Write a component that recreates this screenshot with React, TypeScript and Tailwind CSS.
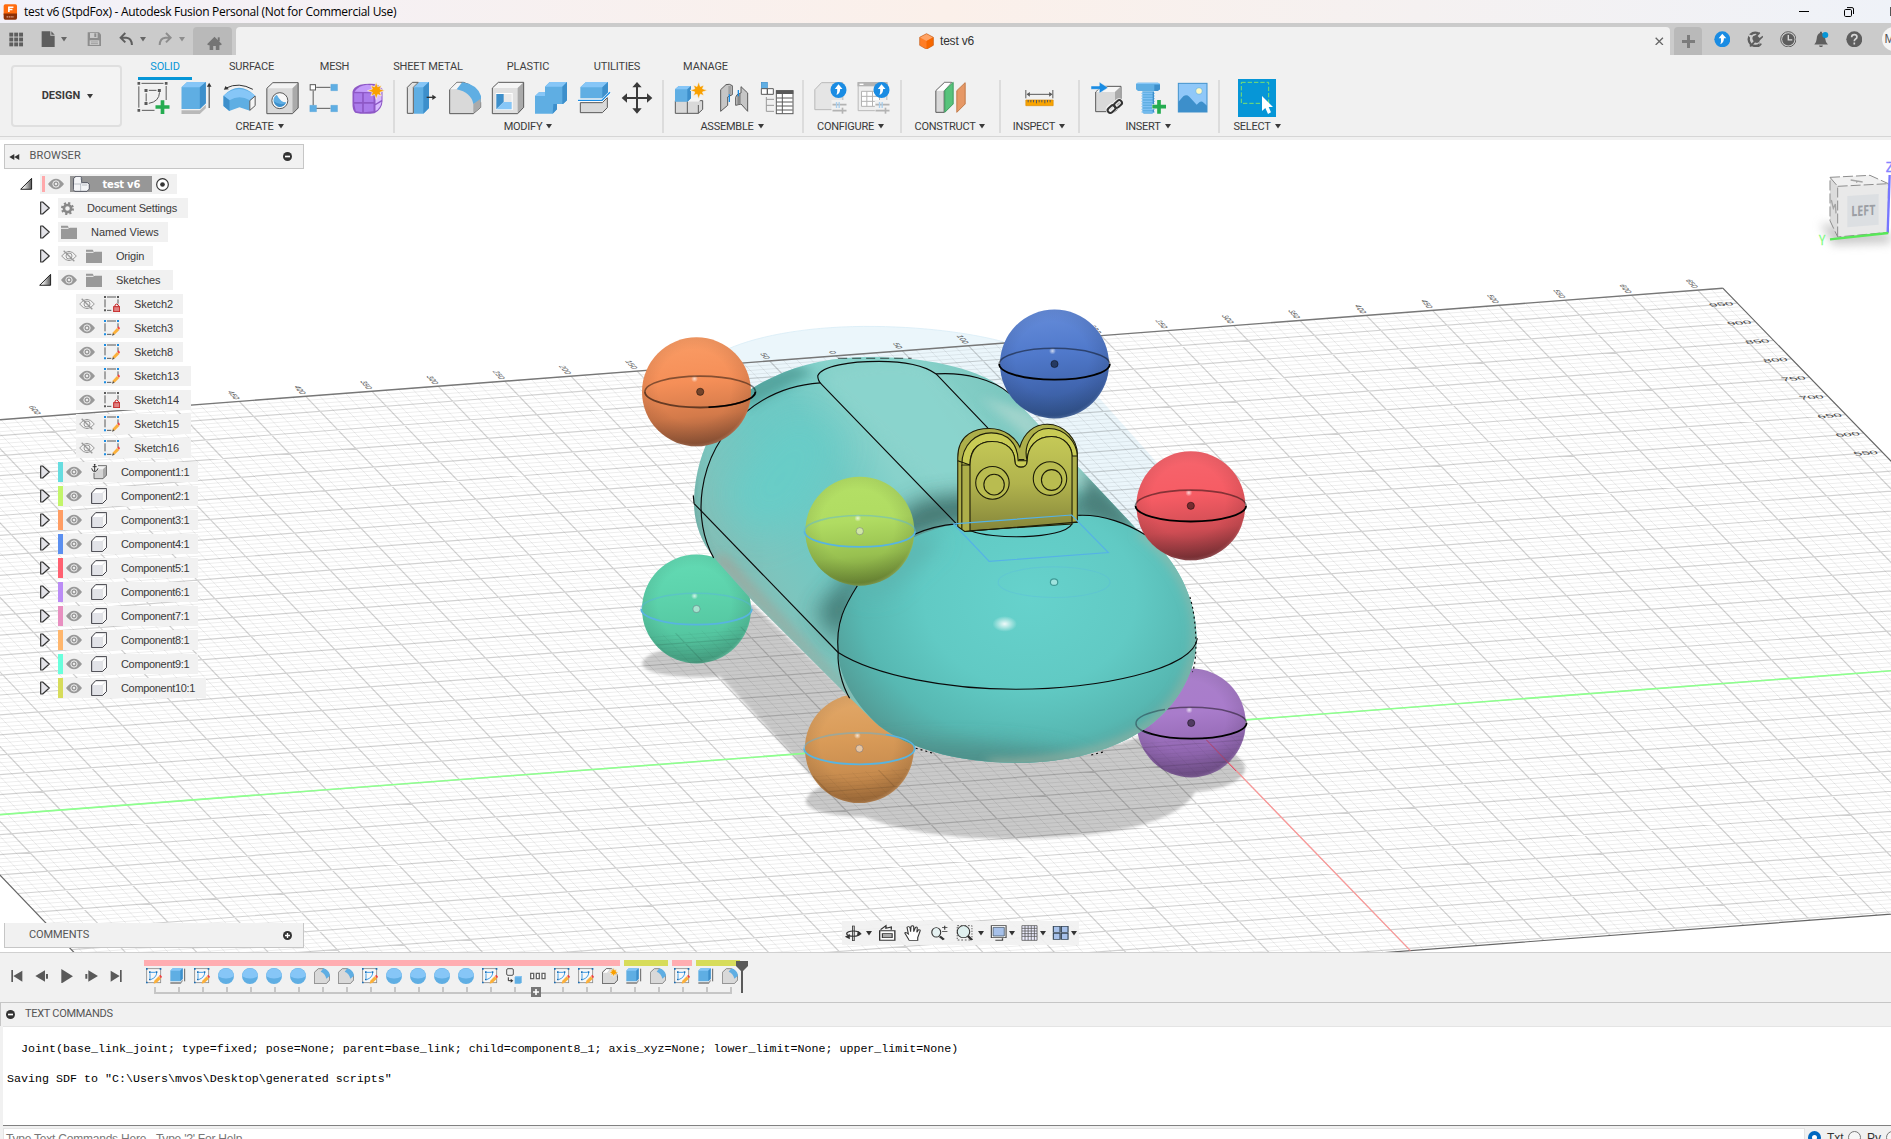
import React from "react";

type Kids = { children?: React.ReactNode };

/* ---------- shared helpers ---------- */

function Ico({ vb, w, h, children, className = "" }: { vb: string; w: number; h: number; className?: string } & Kids) {
  return (
    <svg viewBox={vb} width={w} height={h} preserveAspectRatio="none" className={`block shrink-0 ${className}`} fill="none">
      {children}
    </svg>
  );
}

const Tool = ({ x, y, children }: { x: number; y: number } & Kids) => (
  <Ico vb={`${x} ${y} 129 108`} w={43} h={36}>{children}</Ico>
);

const Caret = ({ className = "" }: { className?: string }) => (
  <svg viewBox="0 0 6 5" width={6} height={5} className={`shrink-0 ${className}`}>
    <path d="M0 0H6L3 4.5Z" fill="currentColor" />
  </svg>
);

const Star = ({ x, y, r }: { x: number; y: number; r: number }) => {
  const pts = Array.from({ length: 16 }, (_, i) => {
    const a = (i * Math.PI) / 8 - Math.PI / 2;
    const q = i % 2 ? r * 0.48 : i % 4 === 0 ? r : r * 0.85;
    return `${(x + q * Math.cos(a)).toFixed(1)},${(y + q * Math.sin(a)).toFixed(1)}`;
  });
  return <polygon points={pts.join(" ")} fill="#f9a000" stroke="#f2f2f2" strokeWidth="2" />;
};

const UpBadge = ({ x, y }: { x: number; y: number }) => (
  <g>
    <circle cx={x} cy={y} r="24" fill="#1a8ce3" />
    <path d={`M${x} ${y - 17}L${x + 12} ${y - 3}H${x + 5}Q${x + 5} ${y + 10} ${x - 6} ${y + 15}Q${x - 3} ${y + 8} ${x - 4} ${y - 3}H${x - 11}Z`} fill="#fff" />
  </g>
);

/* ---------- title bar and tabs ---------- */

function TitleBar() {
  return (
    <div className="flex h-[23px] shrink-0 items-center bg-gradient-to-r from-[#f2f1f9] via-[#fbf0ea] to-[#eff2f8]">
      <Ico vb="8 8 46 50" w={15} h={16} className="ml-[3px]">
        <rect x="10" y="9" width="41" height="36" rx="5" fill="#ff6b0f" />
        <path d="M10 38H51V52Q51 57 46 57H15Q10 57 10 52Z" fill="#8c2f06" />
        <path d="M26 33V18H40M26 25H37" stroke="#fff" strokeWidth="5" />
        <path d="M19 48H42" stroke="#d9a08a" strokeWidth="4" strokeDasharray="5 2" />
      </Ico>
      <span className="ml-[6px] whitespace-nowrap font-['Open_Sans',sans-serif] text-[12px] leading-[23px] tracking-[-0.28px] text-black">
        test v6 (StpdFox) - Autodesk Fusion Personal (Not for Commercial Use)
      </span>
      <div className="ml-auto flex items-center text-black">
        <div className="h-px w-[10px] bg-black" />
        <Ico vb="0 0 10 10" w={10} h={10} className="ml-[35px]">
          <rect x=".5" y="2.5" width="7" height="7" rx="1.2" stroke="#000" />
          <path d="M3 .6H8Q9.5 .6 9.5 2V7" stroke="#000" />
        </Ico>
        <div className="ml-[36px] h-[9px] w-px overflow-hidden bg-[#555]" />
      </div>
    </div>
  );
}

function TabBar() {
  return (
    <div className="flex h-8 shrink-0 items-end bg-[#cbcbcb] text-[#666]">
      <div className="flex h-8 w-[193px] items-center">
        <Ico vb="26 94 46 46" w={15} h={15} className="ml-[9px]">
          {[0, 1, 2].map((r) => [0, 1, 2].map((c) => (
            <rect key={`${r}${c}`} x={27 + c * 15} y={96 + r * 15} width="12" height="12" fill="#5e5e5e" />
          )))}
        </Ico>
        <Ico vb="124 92 42 50" w={14} h={16.6} className="ml-[17px]">
          <path d="M126 93H152V106H165V141H126Z" fill="#5e5e5e" />
          <path d="M155 93L165 103H155Z" fill="#5e5e5e" />
        </Ico>
        <Caret className="ml-[6px]" />
        <Ico vb="260 95 44 44" w={14.6} h={14.6} className="ml-[19.5px]">
          <path d="M262 96H296L303 103V138H262Z" fill="#8d8d8d" />
          <path d="M269 98H292V113H269Z" fill="#cbcbcb" /><path d="M282 99H288V110H282Z" fill="#8d8d8d" />
          <path d="M268 120H297V134H268Z" fill="#cbcbcb" /><path d="M272 125H293M272 130H293" stroke="#8d8d8d" strokeWidth="2" />
        </Ico>
        <Ico vb="358 96 44 42" w={14.6} h={14} className="ml-[18px]">
          <path d="M377 99L363 113L377 127M365 113H380Q396 114 397 135" stroke="#5e5e5e" strokeWidth="6" />
        </Ico>
        <Caret className="ml-[6px]" />
        <Ico vb="476 96 44 42" w={14.6} h={14} className="ml-[12.5px]">
          <path d="M500 99L514 113L500 127M513 113H498Q482 114 481 135" stroke="#8d8d8d" strokeWidth="6" />
        </Ico>
        <Caret className="ml-[6px] text-[#8d8d8d]" />
      </div>
      <div className="flex h-7 w-[39px] items-center justify-center rounded-t bg-[#b9b9b9]">
        <Ico vb="619 104 46 44" w={15} h={14.6} className="ml-[3px] mt-1">
          <path d="M619 129L642 106L665 129L660 132H657V147H646V134H638V147H627V132H624Z" fill="#757575" />
          <path d="M652 108H658V120H652Z" fill="#757575" />
        </Ico>
      </div>
      <div className="ml-1 flex h-7 w-[1434px] items-center rounded-t bg-[#f1f1f1]">
        <div className="ml-[683px] flex items-center">
          <Ico vb="358 10 46 50" w={15} h={16.6}>
            <path d="M381 12L402 23V47L381 59L360 47V23Z" fill="#ff7e26" />
            <path d="M381 12L402 23L381 34L360 23Z" fill="#ffa365" />
            <path d="M381 34L402 23V47L381 59Z" fill="#f76800" />
            <path d="M381 12L402 23V47L381 59L360 47V23Z" stroke="#c36424" strokeWidth="2" />
          </Ico>
          <span className="ml-[6px] text-[12px] tracking-[-0.2px] text-[#333]">test v6</span>
        </div>
        <Ico vb="464 110 26 26" w={8.6} h={8.6} className="ml-auto mr-[6px]">
          <path d="M466 112L488 134M488 112L466 134" stroke="#666" strokeWidth="4" />
        </Ico>
      </div>
      <div className="ml-1 flex h-7 w-7 items-center justify-center rounded-t bg-[#b9b9b9]">
        <Ico vb="0 0 13 13" w={13} h={13}><path d="M6.5 0V13M0 6.5H13" stroke="#7c7c7c" strokeWidth="3" /></Ico>
      </div>
      <div className="flex h-8 flex-1 items-center gap-[16.4px] overflow-hidden pl-[11.6px]">
        <Ico vb="641 91 50 50" w={16.6} h={16.6}><UpBadge x={666} y={116} /></Ico>
        <Ico vb="740 92 50 50" w={16.6} h={16.6}>
          <circle cx="765" cy="117" r="20" stroke="#5e5e5e" strokeWidth="7" />
          <path d="M738 100L758 106L762 118L776 96L790 100V140H775L779 122L765 128L755 118Z" fill="#cbcbcb" />
          <path d="M747 137L760 123Q750 108 765 105L777 95L780 99L772 107L778 113L787 106L789 110L779 120Q776 132 764 127L752 140Z" fill="#5e5e5e" />
          <path d="M783 130A23 23 0 0 1 760 140" stroke="#5e5e5e" strokeWidth="5" />
        </Ico>
        <Ico vb="839 92 50 50" w={16.6} h={16.6}>
          <circle cx="864" cy="117" r="23" stroke="#5e5e5e" strokeWidth="3" /><circle cx="864" cy="117" r="18.5" fill="#5e5e5e" />
          <path d="M864 104V119H876" stroke="#ddd" strokeWidth="4" />
        </Ico>
        <Ico vb="939 92 50 50" w={16.6} h={16.6}>
          <path d="M943 133Q949 128 950 116Q951 101 960 98V94H966V98Q975 102 976 116Q977 128 984 133Z" fill="#5e5e5e" />
          <path d="M957 136H969Q968 141 963 141Q958 141 957 136Z" fill="#5e5e5e" /><circle cx="976" cy="104" r="9" fill="#0696d7" />
        </Ico>
        <Ico vb="1037 92 50 50" w={16.6} h={16.6}>
          <circle cx="1062" cy="117" r="24" fill="#5e5e5e" />
          <path d="M1054 111Q1054 103 1062 103Q1070 103 1070 110Q1070 114 1065 117Q1062 119 1062 123M1062 127V133" stroke="#d8d8d8" strokeWidth="5" />
        </Ico>
        <div className="ml-[3px] flex h-6 w-6 shrink-0 items-center rounded-full bg-[#f5f5f5] pl-[3px] text-[12px] text-[#555]">M</div>
      </div>
    </div>
  );
}

/* ---------- ribbon ---------- */

const BL = "#5faee3", BT = "#86c6f7", BD = "#3d8fcb", GR = "#d9d9d9", LN = "#595959";

const createIcons = [
  <Tool key="a" x={397.5} y={240}>
    <path d="M423 250H489M415 259V323M424 331H462M497 258V300M437 280V304M445 271H468M477 277Q476 305 445 310" stroke={LN} strokeWidth="3" />
    <path d="M411 246h8v8h-8zM493 246h8v8h-8zM411 327h8v8h-8zM432 267h9v9h-9zM472 267h9v9h-9zM432 306h9v9h-9z" fill={LN} />
    <path d="M486 301V342M465 321H507" stroke="#f2f2f2" strokeWidth="15" /><path d="M486 301V342M465 321H507" stroke="#25ac50" strokeWidth="11" />
  </Tool>,
  <Tool key="b" x={526.5} y={240}>
    <path d="M543 331H598L616 314V325L598 342H543Z" fill="#b9b9b9" />
    <path d="M543 262L560 246H616V310L598 327H543Z" fill={BL} /><path d="M543 262L560 246H616L598 262Z" fill={BT} /><path d="M598 262L616 246V310L598 327Z" fill={BD} />
    <path d="M626 324V256" stroke="#333" strokeWidth="3" /><path d="M619 260L626 248L633 260Z" fill="#333" />
  </Tool>,
  <Tool key="c" x={655.5} y={240}>
    <path d="M669 287Q715 240 764 287L748 303V332L717 322L686 333L669 318Z" fill={BL} />
    <path d="M669 287Q715 247 764 287L748 301Q717 282 687 301Z" fill={BT} /><path d="M669 287L687 301V333L669 318Z" fill={BD} />
    <path d="M748 302L764 288V317L748 331Z" fill="#f5f5f5" stroke={LN} strokeWidth="3" />
    <path d="M677 264Q715 245 757 268" stroke="#333" strokeWidth="3" /><path d="M670 269L675 258L685 268Z" fill="#333" />
  </Tool>,
  <Tool key="d" x={784.5} y={240}>
    <path d="M799 265L817 248H893V324L876 341H799Z" fill={GR} /><path d="M799 265L817 248H893L876 265Z" fill="#f3f3f3" /><path d="M876 265L893 248V324L876 341Z" fill="#aaa" />
    <path d="M799 265L817 248H893V324L876 341H799Z" stroke={LN} strokeWidth="3" />
    <circle cx="838" cy="302" r="24" fill="#f7f7f7" stroke={LN} strokeWidth="3" />
    <path d="M829 284Q818 291 819 303Q822 318 838 321Q852 319 857 307Q840 307 829 284Z" fill={BL} /><path d="M820 304Q824 320 838 321Q850 320 856 309Q838 318 820 304Z" fill={BD} />
  </Tool>,
  <Tool key="e" x={913.5} y={240}>
    <path d="M947 262H990M938 272V316M947 325H990" stroke={LN} strokeWidth="3" />
    <rect x="929" y="254" width="16" height="16" fill="#fff" stroke={LN} strokeWidth="3" />
    <path d="M991 253h20v19h-20zM928 316h20v19h-20zM991 316h20v19h-20z" fill={BL} stroke="#4c9bd0" strokeWidth="1" />
  </Tool>,
  <Tool key="f" x={1042.5} y={240}>
    <path d="M1056 275Q1058 262 1079 254Q1098 250 1125 252Q1138 257 1146 267V304Q1145 328 1122 340Q1090 344 1064 338Q1055 330 1056 310Z" fill="#8e58c6" />
    <path d="M1062 275Q1075 256 1100 254L1133 259L1118 277Z" fill="#c49bfa" />
    <path d="M1061 280H1085V306H1061ZM1090 280H1119V306H1090ZM1061 311H1085V337L1066 334ZM1090 311H1119V334L1090 337Z" fill="#ab7beb" />
    <path d="M1125 278L1143 264V300L1125 311ZM1125 316L1143 305Q1140 325 1125 333Z" fill="#d9bbff" />
    <Star x={1127} y={272} r={26} />
  </Tool>,
];

const modifyIcons = [
  <Tool key="a" x={0} y={90}>
    <path d="M22 112L37 97H55L40 112V190H22Z" fill="#e1e1e1" stroke={LN} strokeWidth="3" />
    <path d="M42 112L59 96H87V174L70 191H42Z" fill={BL} /><path d="M42 112L59 96H87L70 112Z" fill={BT} /><path d="M70 112L87 96V174L70 191Z" fill={BD} />
    <path d="M80 142H100" stroke="#333" strokeWidth="4" /><path d="M97 134L109 142L97 150Z" fill="#333" />
  </Tool>,
  <Tool key="b" x={129} y={90}>
    <path d="M149 119L171 97H190Q232 107 242 158V172L220 191H149Z" fill={GR} stroke={LN} strokeWidth="3" />
    <path d="M150 118L171 98H185L172 117Z" fill="#f5f5f5" /><path d="M170 118L187 97Q231 103 243 138V155L220 162Q213 127 170 118Z" fill={BL} />
    <path d="M220 162L242 146V172L220 190Z" fill="#aaa" />
  </Tool>,
  <Tool key="c" x={258} y={90}>
    <path d="M277 114L295 97H371V172L353 191H277Z" fill="#e0e0e0" /><path d="M277 114L295 97H371L353 114Z" fill="#f5f5f5" /><path d="M353 114L371 97V172L353 191Z" fill="#aaa" />
    <path d="M277 114L295 97H371V172L353 191H277Z" stroke={LN} strokeWidth="3" />
    <path d="M287 129H338V180H287Z" fill="#fff" /><path d="M289 132H335V178H289Z" fill="#e9e9e9" /><path d="M289 132H311V156L289 178Z" fill={BD} /><path d="M289 178L311 156H335V178Z" fill={BT} />
  </Tool>,
  <Tool key="d" x={387} y={90}>
    <path d="M405 138L417 127H435V110L449 96H501V151L489 162H471V178L458 191H405Z" fill={BL} />
    <path d="M405 138L417 127H435V138ZM435 110L449 96H501L487 110Z" fill={BT} /><path d="M487 110L501 96V151L489 162H487ZM460 162H471V178L458 191Z" fill={BD} />
  </Tool>,
  <Tool key="e" x={516} y={90}>
    <path d="M541 112L558 96H624V129L607 145H541Z" fill={BL} /><path d="M541 112L558 96H624L607 112Z" fill={BT} /><path d="M607 112L624 96V129L607 145Z" fill={BD} />
    <path d="M541 158H607L622 143V173L607 188H541Z" fill={GR} stroke={LN} strokeWidth="3" />
    <path d="M534 151H606L630 127" stroke="#fff" strokeWidth="8" /><path d="M534 151H606L630 127" stroke="#1a8ce3" strokeWidth="4" />
  </Tool>,
  <Tool key="f" x={645} y={90}>
    <path d="M711 105V182M674 144H748" stroke="#3a3a3a" strokeWidth="6" />
    <path d="M697 112L711 96L725 112ZM697 175L711 191L725 175ZM681 130L665 144L681 158ZM741 130L757 144L741 158Z" fill="#3a3a3a" />
  </Tool>,
];

const assembleIcons = [
  <Tool key="a" x={807} y={90}>
    <path d="M826 152H908V178L895 190H826ZM862 152V190M895 165V190" fill={GR} stroke={LN} strokeWidth="3" />
    <path d="M862 155L874 143H908L896 155Z" fill="#f5f5f5" />
    <path d="M825 118L836 108H873V145L862 155H825Z" fill={BL} /><path d="M825 118L836 108H873L862 118Z" fill={BT} /><path d="M862 118L873 108V145L862 155Z" fill={BD} />
    <Star x={896} y={121} r={26} />
  </Tool>,
  <Tool key="b" x={936} y={90}>
    <path d="M962 119L978 104Q988 100 997 107V134L983 141V166L962 184Z" fill="#c6c6c6" stroke={LN} strokeWidth="3" />
    <path d="M1043 129L1023 110V129Q1007 133 1007 142V166L1023 162L1043 184Z" fill="#c6c6c6" stroke={LN} strokeWidth="3" />
    <path d="M1012 136V165L1022 160V130Z" fill="#8a8a8a" /><path d="M989 108V134" stroke="#a2a2a2" strokeWidth="8" />
    <path d="M988 133V156M1015 120V139" stroke="#1a8ce3" strokeWidth="4" />
  </Tool>,
  <Tool key="c" x={1065} y={90}>
    <rect x="1084" y="97" width="18" height="18" fill={BL} stroke={BD} strokeWidth="2" />
    <path d="M1084 116h18v17h-18zM1102 116h18v17h-18z" fill="#fff" stroke={LN} strokeWidth="3" />
    <path d="M1099 141V184M1099 148H1122M1099 166H1122M1099 184H1122" stroke="#999" strokeWidth="3" />
    <rect x="1129" y="122" width="50" height="69" fill="#fff" stroke={LN} strokeWidth="3" /><path d="M1128 121H1180V132H1128Z" fill={LN} />
    <path d="M1147 132V190M1130 144H1178M1130 156H1178M1130 168H1178M1130 180H1178" stroke={LN} strokeWidth="3" />
  </Tool>,
];

const Sliders = ({ x }: { x: number }) => (
  <g><path d={`M${x} 224H${x + 42}M${x} 242H${x + 42}`} stroke="#b3b3b3" strokeWidth="5" /><path d={`M${x + 12} 216V234M${x + 20} 216V234`} stroke="#a9cfee" strokeWidth="4" /><path d={`M${x + 30} 233V251`} stroke="#b3b3b3" strokeWidth="5" /></g>
);

const configureIcons = [
  <Tool key="a" x={28.5} y={150}>
    <path d="M46 179L66 158H130V239H46Z" fill="#e5e5e5" stroke="#b8b8b8" strokeWidth="3" />
    <UpBadge x={117} y={180} /><path d="M96 210H142V252H96Z" fill="#f1f1f1" /><Sliders x={99} />
  </Tool>,
  <Tool key="b" x={157.5} y={150}>
    <path d="M176 158H262V242H176Z" fill="#eee" stroke="#b8b8b8" strokeWidth="3" /><path d="M174 156H264V169H174Z" fill="#b3b3b3" /><path d="M180 161H192V165H180Z" fill="#fff" />
    <path d="M186 184H240V229H186ZM202 184V229M219 184V229M186 199H240M186 214H240" stroke="#b3b3b3" strokeWidth="3" fill="#fff" />
    <UpBadge x={246} y={180} /><path d="M226 210H272V252H226Z" fill="#f1f1f1" /><Sliders x={228} />
  </Tool>,
];

const constructIcons = [
  <Tool key="a" x={388.5} y={150}>
    <path d="M409 182L435 157H456L434 182V247H409Z" fill={GR} stroke={LN} strokeWidth="3" /><path d="M411 182L436 158H455L433 182Z" fill="#fff" />
    <path d="M436 181L461 157V222L436 247Z" fill="#57c37b" stroke="#3f9d60" strokeWidth="3" /><path d="M472 182L497 158V222L472 247Z" fill="#e69866" stroke="#c27a48" strokeWidth="3" />
  </Tool>,
];
const inspectIcons = [
  <Tool key="a" x={655.5} y={150}>
    <path d="M679 180V205M760 180V205M685 193H755" stroke={LN} strokeWidth="3" /><path d="M681 193L691 186V200ZM759 193L749 186V200Z" fill={LN} />
    <path d="M679 210H761V227H679Z" fill="#f9a400" stroke="#db8a00" strokeWidth="2" /><path d="M686 210V217M694 210V217M702 210V217M711 210V220M719 210V217M727 210V217M736 210V220M744 210V217M752 210V217" stroke={LN} strokeWidth="3" />
  </Tool>,
];
const insertIcons = [
  <Tool key="a" x={855} y={150}>
    <path d="M887 186L905 169H963V227L945 245H887Z" fill={GR} stroke={LN} strokeWidth="3" /><path d="M889 186L905 171H960L944 186Z" fill="#f6f6f6" /><path d="M945 186L962 170V226L945 244Z" fill="#aaa" />
    <path d="M873 168H898V156L924 173L898 190V178H873Z" fill="#1a8ce3" stroke="#f1f1f1" strokeWidth="1.5" />
    <g stroke="#f1f1f1" strokeWidth="12"><rect x="922" y="228" width="25" height="16" rx="8" transform="rotate(-42 934 236)" /><rect x="942" y="214" width="25" height="16" rx="8" transform="rotate(-42 954 222)" /></g>
    <g stroke="#333" strokeWidth="6"><rect x="922" y="230" width="26" height="16" rx="8" transform="rotate(-42 934 238)" /><rect x="941" y="214" width="26" height="16" rx="8" transform="rotate(-42 954 222)" /></g>
  </Tool>,
  <Tool key="b" x={984} y={150}>
    <path d="M1008 162L1013 158H1074L1080 162V178L1073 183H1014L1008 178Z" fill={BL} /><path d="M1008 162L1013 158H1074L1080 162Z" fill={BT} /><path d="M1063 164H1080V178L1073 183H1063Z" fill={BD} />
    <path d="M1027 184H1062V247L1057 251H1031L1027 247Z" fill={BL} /><path d="M1024 190H1065M1024 198H1065M1024 206H1065M1024 214H1065M1024 222H1065M1024 230H1065M1024 238H1065M1024 246H1065" stroke={BT} strokeWidth="3" /><path d="M1060 186V247" stroke={BD} strokeWidth="4" />
    <path d="M1077 209V252M1056 230H1099" stroke="#f1f1f1" strokeWidth="15" /><path d="M1077 210V251M1057 230H1098" stroke="#25ac50" strokeWidth="11" />
  </Tool>,
  <Tool key="c" x={1113} y={150}>
    <rect x="1135" y="160" width="86" height="86" fill="#90c8f9" stroke="#4292cc" strokeWidth="3" />
    <path d="M1135 216Q1143 207 1150 199Q1159 192 1168 200L1190 224L1198 217Q1204 211 1211 218L1221 227V246H1135Z" fill="#3d8fcb" /><circle cx="1197" cy="183" r="10" fill="#fff9c4" stroke="#5faee3" strokeWidth="2" />
  </Tool>,
];
const selectIcons = [
  <svg key="a" viewBox="1314 147 114 114" width={38} height={38} className="-mt-px -mb-px block shrink-0">
    <path d="M1314 147H1428V261H1314Z" fill="#0696d7" /><path d="M1324 157H1406V220H1324Z" fill="none" stroke="#7be06e" strokeWidth="3" strokeDasharray="13 6" />
    <path d="M1386 198V243L1396 234L1404 252L1413 247L1406 231H1419Z" fill="#fff" />
  </svg>,
];

const ribbonTabs: [string, string][] = [
  ["SOLID", "w-[78px]"], ["SURFACE", "w-[95px]"], ["MESH", "w-[71px]"], ["SHEET METAL", "w-[116px]"],
  ["PLASTIC", "w-[84px]"], ["UTILITIES", "w-[94px]"], ["MANAGE", "w-[83px]"],
];

const groups: [string, string, React.ReactNode[], string][] = [
  ["CREATE", "w-[264px]", createIcons, "-ml-[5px]"], ["MODIFY", "w-[269px]", modifyIcons, "-ml-[1px]"], ["ASSEMBLE", "w-[140px]", assembleIcons, "-ml-[2px]"],
  ["CONFIGURE", "w-[98px]", configureIcons, "-ml-[3px]"], ["CONSTRUCT", "w-[99px]", constructIcons, "-ml-[1px]"], ["INSPECT", "w-[79px]", inspectIcons, "-ml-[1px]"],
  ["INSERT", "w-[140px]", insertIcons, "-ml-[2px]"], ["SELECT", "w-[74px]", selectIcons, "ml-0"],
];

function Ribbon() {
  return (
    <div className="flex h-[85px] shrink-0 border-b-[3px] border-[#f1f1f1] bg-[#f1f1f1]">
      <div className="flex w-full border-b border-[#d6d6d6]">
        <button className="ml-[11px] mt-[10px] flex h-[62px] w-[111px] items-center justify-center gap-[7px] rounded border-2 border-[#dfdfdf] bg-[#f3f3f3] pl-[2px] pt-[1px] font-['Roboto',sans-serif] text-[11px] font-bold text-[#3a3a3a]">
          DESIGN <Caret className="-mt-px" />
        </button>
        <div className="ml-[4px]">
          <div className="flex h-[25px] font-['Roboto',sans-serif] text-[11px] tracking-[-0.15px] text-[#3f3f3f]">
            {ribbonTabs.map(([t, w], i) => (
              <div key={t} className={`${w} flex justify-center pt-[4px] leading-4`}>
                {i === 0 ? <span className="flex w-[54px] justify-center border-b-[3px] border-[#0696d7] text-[#0696d7]">{t}</span> : t}
              </div>
            ))}
          </div>
          <div className="ml-[5px] flex">
            {groups.map(([name, w, icons, off], i) => (
              <div key={name} className={`${w} flex h-[53px] flex-col items-center ${i < groups.length - 1 ? "border-r-2 border-[#dcdcdc]" : ""}`}>
                <div className="flex h-9">{icons}</div>
                <div className={`mt-[4px] flex items-center gap-[4px] whitespace-nowrap font-['Roboto',sans-serif] text-[11px] leading-[14px] tracking-[-0.25px] text-[#3a3a3a] ${off}`}>
                  {name}<Caret className="-mt-[2px]" />
                </div>
              </div>
            ))}
          </div>
        </div>
      </div>
    </div>
  );
}

/* ---------- 3D viewport ---------- */

const gx = (u: number, v: number) => 1191 + (66.5 - 0.011 * v) * u - (v > 0 ? 17.93 : 18.1) * v;
const gy = (u: number, v: number) => 724 - 5.06 * u - (v > 0 ? 18.59 : 18.7) * v;
const U0 = -18.72, U1 = 13.38, V0 = -12.12, V1 = 19.8;
const seg = (u1: number, v1: number, u2: number, v2: number) =>
  `M${gx(u1, v1).toFixed(1)} ${gy(u1, v1).toFixed(1)}L${gx(u2, v2).toFixed(1)} ${gy(u2, v2).toFixed(1)}`;

function gridPaths() {
  let major = "", minor = "";
  for (let i = Math.ceil(U0 * 5); i <= U1 * 5; i++) {
    const d = seg(i / 5, V0, i / 5, 0) + seg(i / 5, 0, i / 5, V1);
    if (i % 5 === 0) major += d; else minor += d;
  }
  for (let i = Math.ceil(V0 * 5); i <= V1 * 5; i++) {
    const d = seg(U0, i / 5, U1, i / 5);
    if (i % 5 === 0) major += d; else minor += d;
  }
  return { major, minor };
}
const grid = gridPaths();

const Grid = () => (
  <g fill="none">
    <path d={grid.minor} stroke="#000" strokeOpacity=".07" />
    <path d={grid.major} stroke="#000" strokeOpacity=".18" strokeWidth="1.2" />
  </g>
);

const balls: Record<string, [number, number, string[]]> = {
  orange: [696.5, 391.8, ["#fa9c65", "#f58f58", "#d37a4a", "#8f5437"]],
  blue: [1054.5, 364, ["#658cda", "#5079cb", "#4166b0", "#32558f"]],
  red: [1190.8, 505.8, ["#f6656d", "#f65c64", "#cf4d54", "#7d3237"]],
  lime: [859.8, 531.2, ["#b4e066", "#b0dc62", "#98c050", "#6d8a35"]],
  mint: [696.5, 609, ["#63dbb4", "#5cd2ab", "#55c7a1", "#4bab8b"]],
  amber: [859.4, 748.6, ["#e2a869", "#d99b58", "#c98d4f", "#a8713c"]],
  purple: [1191.2, 723, ["#a97fca", "#a97ccb", "#9469b4", "#76538f"]],
};

function Ball({ id, blue = false, dx = 0 }: { id: string; blue?: boolean; dx?: number }) {
  const [x, y] = balls[id];
  const c = blue ? "#58b4e0" : "#000";
  return (
    <g>
      <circle cx={x} cy={y} r="54.5" fill={`url(#${id})`} />
      <circle cx={x} cy={y} r="54.5" fill="url(#rim)" />
      <circle cx={x - 2} cy={y - 13} r="3.5" fill="url(#spec)" opacity=".8" />
      <path d={`M${x + dx - 55.3} ${y}A55.3 15.7 0 0 1 ${x + dx + 55.3} ${y}`} fill="none" stroke={c} strokeOpacity=".45" strokeWidth="1.6" />
      <path d={`M${x + dx - 55.3} ${y}A55.3 15.7 0 0 0 ${x + dx + 55.3} ${y}`} fill="none" stroke={c} strokeOpacity={id === "orange" ? 0.55 : 1} strokeWidth="1.8" />
      {id === "orange" && <path d={`M${x + 12} ${y + 15.4}A55.3 15.7 0 0 0 ${x + dx + 55.3} ${y}`} fill="none" stroke="#000" strokeWidth="1.6" />}
      <circle cx={x + dx} cy={y} r="3.6" fill={blue ? "#fff" : "#000"} fillOpacity={blue ? 0.45 : 0.5} stroke={blue ? "#667" : "#000"} strokeOpacity=".45" />
    </g>
  );
}

const BODY = "M157 585C163 440 225 325 300 275C370 225 460 190 560 188C700 184 800 210 860 240C900 258 925 285 950 315L1250 680C1330 735 1390 860 1388 980C1387 1065 1345 1160 1270 1222C1210 1270 1110 1324 945 1324C790 1322 680 1280 610 1220C580 1190 560 1165 538 1142L300 870L205 748C170 700 155 640 157 585Z";
const FRONT = "M510 1015C503 930 528 870 557 828C600 750 680 680 800 655L1098 631C1160 628 1220 655 1262 685C1340 750 1390 870 1388 980C1387 1065 1345 1160 1270 1222C1210 1270 1110 1324 945 1324C790 1322 680 1280 610 1220C560 1170 512 1090 510 1015Z";

function Scene() {
  return (
    <svg viewBox="0 140 1891 812" width={1891} height={812} className="block">
      <defs>
        {Object.entries(balls).map(([id, [, , c]]) => (
          <linearGradient key={id} id={id} x1="0.45" x2="0.55" y1="0" y2="1">
            <stop offset="0" stopColor={c[0]} /><stop offset=".4" stopColor={c[1]} /><stop offset=".72" stopColor={c[2]} /><stop offset="1" stopColor={c[3]} />
          </linearGradient>
        ))}
        <radialGradient id="rim" cx=".48" cy=".45" r=".56"><stop offset=".6" stopColor="#000" stopOpacity="0" /><stop offset=".93" stopColor="#000" stopOpacity=".1" /><stop offset="1" stopColor="#fff" stopOpacity=".15" /></radialGradient>
        <radialGradient id="spec"><stop offset="0" stopColor="#fff" stopOpacity=".9" /><stop offset="1" stopColor="#fff" stopOpacity="0" /></radialGradient>
        <linearGradient id="tube" gradientUnits="userSpaceOnUse" x1="230" y1="760" x2="1010" y2="340">
          <stop offset="0" stopColor="#84beb6" /><stop offset=".12" stopColor="#7cc5be" /><stop offset=".28" stopColor="#6fc9c4" /><stop offset=".4" stopColor="#70c9c4" /><stop offset=".55" stopColor="#88d2cb" /><stop offset=".75" stopColor="#88d2cb" /><stop offset="1" stopColor="#78c4bc" />
        </linearGradient>
        <radialGradient id="front" gradientUnits="userSpaceOnUse" cx="0" cy="0" r="1" gradientTransform="translate(980 860) scale(520 500)">
          <stop offset="0" stopColor="#66d2cc" /><stop offset=".5" stopColor="#61cac4" /><stop offset=".8" stopColor="#57b8b2" /><stop offset="1" stopColor="#539d97" />
        </radialGradient>
        <linearGradient id="tooth" x1="0" x2="0" y1="0" y2="1"><stop offset="0" stopColor="#c5c957" /><stop offset=".5" stopColor="#b1b34d" /><stop offset="1" stopColor="#85863a" /></linearGradient>
        <filter id="b45" x="-80%" y="-80%" width="260%" height="260%"><feGaussianBlur stdDeviation="50" /></filter>
        <filter id="b30" x="-50%" y="-50%" width="200%" height="200%"><feGaussianBlur stdDeviation="30" /></filter>
        <filter id="b14" x="-50%" y="-50%" width="200%" height="200%"><feGaussianBlur stdDeviation="14" /></filter>
        <filter id="b4"><feGaussianBlur stdDeviation="4" /></filter>
        <clipPath id="cb"><path d={BODY} /></clipPath>
        <clipPath id="cf"><path d={FRONT} /></clipPath>
        <clipPath id="low">
          <path d="M649 636A54.5 54.5 0 0 0 748 626Z" /><path d="M812 776A54.5 54.5 0 0 0 910 767Z" /><path d="M1140 743A54.5 54.5 0 0 0 1245 733Z" />
        </clipPath>
      </defs>

      <path d={`M${gx(U0, V0)} ${gy(U0, V0)}L${gx(U1, V0)} ${gy(U1, V0)}L${gx(U1, V1)} ${gy(U1, V1)}L${gx(U0, V1)} ${gy(U0, V1)}Z`} fill="#fff" />
      <g transform="translate(630 290) scale(.40816 .35714)">
        <path d="M240 165C320 125 450 100 600 102C740 104 850 125 915 145L1140 290L1320 520C1350 560 1390 600 1388 655C1380 690 1350 715 1310 732L900 600L300 280Z" fill="#e3f2fa" fillOpacity=".7" />
        <path d="M240 165C320 125 450 100 600 102C740 104 850 125 915 145" fill="none" stroke="#d6ebf6" strokeWidth="2" />
        <path filter="url(#b4)" d="M30 1045C40 1010 100 1000 180 1010L300 880L600 1200L1200 1270L1390 1200L1490 1310C1530 1340 1500 1395 1385 1405C1340 1500 1150 1535 930 1537C760 1535 650 1510 575 1475C480 1475 420 1450 432 1425C445 1400 460 1395 470 1390L220 1082C150 1088 30 1080 30 1045Z" fill="#c9c9c9" />
      </g>
      <Grid />
      <path d={seg(U0, V1, U1, V1)} stroke="#777" strokeWidth="1.4" fill="none" />
      <path d={seg(U0, V0, U0, 0) + seg(U1, 0, U1, V1) + seg(U0, V0, U1, V0)} stroke="#666" strokeWidth="1.2" fill="none" />
      <path d={seg(U0, 0, U1, 0)} stroke="#8dff8d" strokeWidth="1.6" />
      <path d={seg(0, V0, 0, 0)} stroke="#ff9494" strokeWidth="1.1" />
      <g fontFamily="'Liberation Sans', sans-serif" fontSize="10" fill="#555" textAnchor="end">
        {Array.from({ length: 26 }, (_, i) => i - 12).map((u) => (
          <text key={u} transform={`matrix(.44 .5 -.85 .07 ${gx(u, V1) - 5} ${gy(u, V1) - 2})`}>{Math.abs(u * 50)}</text>
        ))}
        {Array.from({ length: 11 }, (_, i) => 19 - i).filter((v) => gx(U1, v) < 1891).map((v) => (
          <text key={v} transform={`matrix(1.42 -.11 .4 .5 ${gx(U1, v) - 3} ${gy(U1, v) + 2})`} fill="#444">{v * 50}</text>
        ))}
      </g>

      <Ball id="mint" blue />
      <Ball id="amber" blue />
      <Ball id="purple" />
      <g clipPath="url(#low)" opacity=".6"><Grid /></g>
      <path d="M1206.5 740L1236 771" stroke="#c83f66" strokeOpacity=".8" />

      <g transform="translate(630 290) scale(.40816 .35714)">
        <path d={BODY} fill="url(#tube)" />
        <g clipPath="url(#cb)">
          <path d="M230 560L400 330L520 420L430 620L300 700Z" fill="#68cdc8" filter="url(#b45)" opacity=".9" />
          <path d="M470 262C500 205 700 180 750 235L1000 540L800 600Z" fill="#8cd4cd" opacity=".7" filter="url(#b14)" />
          <path d="M240 260C150 330 120 600 190 760L130 760L80 400Z" fill="#4f9791" filter="url(#b14)" opacity=".9" />
          <path d="M290 330L250 270L400 210L450 230Z" fill="#4b9690" filter="url(#b14)" opacity=".7" />
          <path d="M460 900L520 1000L560 830L700 690L800 655L1100 632L1250 680L1130 560L1090 600L820 570L700 590L640 660Z" fill="#35635f" filter="url(#b30)" opacity=".85" />
          <path d="M860 300L1000 440L1110 560L1150 560L980 340Z" fill="#b9dcd4" filter="url(#b14)" opacity=".6" />
          <path d="M1120 510L1240 670L1180 650L1110 600Z" fill="#4a7d78" filter="url(#b14)" opacity=".8" />
          <path d="M205 748L540 1142L560 1150L230 740Z" fill="#a79f94" filter="url(#b14)" opacity=".75" />
        </g>
        <path d={FRONT} fill="url(#front)" />
        <g clipPath="url(#cf)">
          <ellipse cx="790" cy="1340" rx="330" ry="70" fill="#4e8c86" filter="url(#b30)" opacity=".8" />
          <path d="M1250 680C1340 750 1400 870 1390 980C1387 1065 1345 1160 1270 1222C1180 1300 1000 1330 880 1322" fill="none" stroke="#a9b9a8" strokeWidth="14" filter="url(#b14)" />
          <path d="M700 690L560 850L620 850L760 700Z" fill="#5cb3ae" filter="url(#b30)" />
        </g>
        <ellipse cx="918" cy="935" rx="30" ry="22" fill="url(#spec)" />
        <g fill="none" stroke="#0a0a0a" strokeWidth="1.15">
          {[
            "M538 1143C518 1105 508 1050 510 1015C503 930 528 880 557 828", "M697 684Q745 660 800 655", "M1098 631C1160 628 1220 655 1262 685",
            "M510 1015C600 1080 780 1118 945 1118C1140 1118 1380 1065 1390 975", "M157 598L510 1015", "M466 260C330 270 200 380 177 560C168 630 180 700 205 750",
            "M800 655L470 265Q460 255 460 240C470 212 540 200 610 200C680 200 725 215 750 235L877 387", "M750 235C820 230 890 250 930 290", "M835 674C880 698 1060 700 1083 655",
            "M157 598L155 575",
          ].map((d) => <path key={d} d={d} vectorEffect="non-scaling-stroke" />)}
          <path d="M510 191L690 191" strokeDasharray="9 5" strokeOpacity=".7" vectorEffect="non-scaling-stroke" />
          <path d="M1372 860C1388 920 1392 1030 1378 1070M700 1283L745 1298M1130 1302L1165 1292" strokeDasharray="2 3" vectorEffect="non-scaling-stroke" />
        </g>
        <g stroke="#1d1d08" strokeWidth="1.1">
          <path d="M803 470C803 400 850 388 880 388C920 388 945 415 955 440C965 400 990 376 1022 376C1065 376 1096 420 1096 460V650L820 676L803 662Z" fill="#adaf4a" vectorEffect="non-scaling-stroke" />
          <path d="M813 490C813 430 850 400 885 400C925 400 950 430 951 478L973 478C962 430 990 388 1025 388C1070 388 1095 430 1096 465L1083 465C1083 440 1065 410 1033 410C995 410 973 440 973 480C973 500 943 502 943 480C943 450 925 424 887 424C860 424 833 440 833 490Z" fill="#c9cc55" vectorEffect="non-scaling-stroke" />
          <path d="M833 674V490C833 440 860 424 887 424C925 424 943 450 943 480C943 502 973 502 973 480C973 440 995 410 1033 410C1065 410 1083 440 1083 465V655Z" fill="url(#tooth)" vectorEffect="non-scaling-stroke" />
          <path d="M813 490V670M803 478L833 490M820 676L1096 650M952 475L966 475" fill="none" vectorEffect="non-scaling-stroke" />
          <g fill="#b9bc50">
            <ellipse cx="888" cy="540" rx="41" ry="46" vectorEffect="non-scaling-stroke" /><ellipse cx="892" cy="545" rx="25" ry="29" vectorEffect="non-scaling-stroke" />
            <ellipse cx="1029" cy="528" rx="41" ry="47" vectorEffect="non-scaling-stroke" /><ellipse cx="1033" cy="532" rx="25" ry="29" vectorEffect="non-scaling-stroke" />
          </g>
        </g>
        <g fill="none" stroke="#55b2e6" strokeWidth="1.2">
          <path d="M793 655L1082 630L1172 735L880 760Z" vectorEffect="non-scaling-stroke" />
          <ellipse cx="1039" cy="818" rx="137" ry="43" opacity=".25" vectorEffect="non-scaling-stroke" />
          <circle cx="1039" cy="818" r="9" fill="#9fe3de" stroke="#3f9a95" vectorEffect="non-scaling-stroke" />
        </g>
      </g>
      <path d="M1136 723A55.3 15.7 0 0 1 1165 709.5M1136 723A55.3 15.7 0 0 0 1150 734" fill="none" stroke="#234" strokeOpacity=".5" strokeWidth="1.4" />
      <path d="M886 734.5A55.3 15.7 0 0 1 914.6 749" fill="none" stroke="#58b4e0" strokeWidth="1.5" />
      <Ball id="orange" dx={3.7} />
      <Ball id="blue" />
      <Ball id="red" />
      <Ball id="lime" blue />

      {/* orientation cube */}
      <g transform="translate(1500 0) scale(.33333)">
        <path d="M960 670L1173 700V730L1000 735Z" fill="#999" opacity=".5" filter="url(#b14)" />
        <path d="M990 532L1110 526L1165 551L1013 559Z" fill="#f0f0f0" /><path d="M990 532L1013 559V711L990 662Z" fill="#dcdcdc" /><path d="M1013 559L1165 551V697L1013 711Z" fill="#e9e9e9" />
        <path d="M990 532L1110 526L1165 551V697L1013 711L990 662ZM990 532L1013 559V711M1013 559L1165 551" fill="none" stroke="#8d8d8d" strokeWidth="3" strokeDasharray="30 9" />
        <path d="M1042 588L1136 582V674L1042 682Z" fill="#dcdfe2" />
        <text transform="matrix(1 -.06 0 1 1054 649)" fontFamily="'Open Sans', sans-serif" fontWeight="700" fontSize="43" textLength="72" lengthAdjust="spacingAndGlyphs" fill="#9b9ea4">LEFT</text>
        <path d="M994 600L1000 625L1006 612L1008 640M1052 540L1088 546M1070 541V548" stroke="#a5a5a5" strokeWidth="4" fill="none" />
        <path d="M1169 525L1163 698" stroke="#7676ff" strokeWidth="7" /><path d="M990 718L1165 699" stroke="#58e858" strokeWidth="7" />
        <text x="957" y="735" fontFamily="'Open Sans', sans-serif" fontSize="42" textLength="19" lengthAdjust="spacingAndGlyphs" fill="#7dfa7d" stroke="#7dfa7d">Y</text>
        <text x="1157" y="516" fontFamily="'Open Sans', sans-serif" fontSize="42" fill="#8585ff" stroke="#8585ff">Z</text>
      </g>
    </svg>
  );
}

/* ---------- browser tree ---------- */

const Eye = ({ off = false }: { off?: boolean }) => (
  <Ico vb="0 0 48 36" w={16} h={12}>
    {off ? (
      <g stroke="#9a9a9a" strokeWidth="3"><path d="M2 18Q24 -10 46 18Q24 46 2 18Z" /><circle cx="24" cy="18" r="9" /><path d="M8 2L40 34" strokeWidth="4" /></g>
    ) : (
      <g><path d="M0 18Q24 -14 48 18Q24 50 0 18Z" fill="#999" /><circle cx="24" cy="18" r="9.5" stroke="#f1f1f1" strokeWidth="3" /><circle cx="24" cy="18" r="3.5" fill="#f1f1f1" /></g>
    )}
  </Ico>
);
const Folder = () => (
  <Ico vb="0 0 48 42" w={16} h={14}><path d="M0 2H20L24 8H48V42H0Z" fill="#999" /><path d="M0 10H22L28 4H48" stroke="#f1f1f1" strokeWidth="3" /></Ico>
);
const SketchIcon = ({ lock = false }: { lock?: boolean }) => (
  <Ico vb="312 474 48 48" w={16} h={16}>
    <path d="M321 477H348M315 484V508M321 517H334M354 484V497" stroke="#595959" strokeWidth="3" />
    <path d="M312 474h6v6h-6zM351 474h6v6h-6zM312 514h6v6h-6z" fill={lock ? "#595959" : "#1a8ce3"} />
    {lock ? <g><rect x="341" y="506" width="18" height="15" fill="#df8080" stroke="#c52222" strokeWidth="3" /><path d="M345 505V501Q350 495 355 501V505" stroke="#c52222" strokeWidth="3" /></g>
      : <g><path d="M339 511L351 498L358 504L345 517L337 520Z" fill="#fbb03b" /><path d="M352 497L356 493L360 499L357 503Z" fill="#f33f3f" /><path d="M336 521L339 513L344 518Z" fill="#555" /></g>}
  </Ico>
);
const Cube = ({ anchor = false }: { anchor?: boolean }) =>
  anchor ? (
    <Ico vb="272 164 48 48" w={16} h={16}>
      <path d="M281 180L293 169H319V197L308 208H281Z" fill="#d4d4d4" /><path d="M281 180L293 169H319L308 180Z" fill="#f2f2f2" /><path d="M308 180L319 169V197L308 208Z" fill="#aaa" />
      <path d="M293 169H319V197L308 208H281V190" stroke="#555" strokeWidth="2.5" />
      <path d="M283 168V186M277 172H289M274 177Q276 187 283 187Q290 187 293 177" stroke="#f1f1f1" strokeWidth="6" />
      <path d="M283 168V186M277 172H289M274 177Q276 187 283 187Q290 187 293 177" stroke="#333" strokeWidth="3" /><circle cx="283" cy="166" r="2.5" fill="#333" />
    </Ico>
  ) : (
    <Ico vb="272 234 48 48" w={16} h={16}>
      <path d="M274 249L286 237H318V268L306 281H274Z" fill="#e2e3e8" />
      <path d="M274 249L286 237H318L306 249Z" fill="#fff" /><path d="M306 249L318 237V268L306 281Z" fill="#f8f8f8" />
      <path d="M274 249L286 236H319V268L306 281H274Z" stroke="#3a3a40" strokeWidth="3" strokeLinejoin="round" /><path d="M306 279V250L317 239" stroke="#c9cad0" strokeWidth="1.5" />
    </Ico>
  );
const Closed = () => (
  <Ico vb="119 190 32 42" w={10.6} h={14}><path d="M121 193L127 193L147 211L127 229H121Z" fill="#e3e3e8" stroke="#333" strokeWidth="3.5" strokeLinejoin="round" /></Ico>
);
const Open = () => (
  <Ico vb="60 120 38 38" w={12.6} h={12.6}><path d="M62 154L95 121V154Z" fill="url(#og)" stroke="#222" strokeWidth="3" /><defs><linearGradient id="og"><stop offset=".3" stopColor="#eee" /><stop offset="1" stopColor="#555" /></linearGradient></defs></Ico>
);

const sketches: [string, boolean, boolean, string][] = [
  ["Sketch2", true, true, "w-[107px]"], ["Sketch3", false, false, "w-[107px]"], ["Sketch8", false, false, "w-[107px]"],
  ["Sketch13", false, false, "w-[115px]"], ["Sketch14", false, true, "w-[115px]"], ["Sketch15", true, false, "w-[115px]"], ["Sketch16", true, false, "w-[115px]"],
];
const comps = ["bg-[#66dde0]", "bg-[#c3f56a]", "bg-[#ff9d63]", "bg-[#5b8ff0]", "bg-[#ff6070]", "bg-[#bb8cf5]", "bg-[#e88fc0]", "bg-[#ffb66c]", "bg-[#69ffdc]", "bg-[#d7dc5a]"];

const Row = ({ pad, arrow, w, children }: { pad: string; arrow?: React.ReactNode; w: string } & Kids) => (
  <div className={`flex h-5 items-center ${pad}`}>
    {arrow}
    <div className={`flex h-5 items-center whitespace-nowrap bg-[#f1f1f1] ${w}`}>{children}</div>
  </div>
);

const arrowBox = (a: React.ReactNode) => <span className="flex w-[18px]">{a}</span>;

function Browser() {
  return (
    <div className="absolute left-[4px] top-[4px] w-[300px]">
      <div className="flex h-[25px] items-center border border-[#c6c6c6] bg-[#f1f1f1] text-[#555]">
        <Ico vb="26 46 32 18" w={10.6} h={6} className="ml-[4px]"><path d="M42 46V64L27 55ZM57 46V64L42 55Z" fill="#333" /></Ico>
        <span className="ml-[10px] font-['Roboto',sans-serif] text-[11px] tracking-[0.1px]">BROWSER</span>
        <Ico vb="0 0 27 27" w={9} h={9} className="ml-auto mr-[11px]"><circle cx="13.5" cy="13.5" r="13.5" fill="#333" /><path d="M6 13.5H21" stroke="#fff" strokeWidth="5" /></Ico>
      </div>
      <div className="mt-[5px] flex flex-col gap-1 text-[11px] leading-[19px] tracking-[-0.1px] text-[#3a3a3a]">
        <div className="flex h-5 items-center pl-4">
          <span className="flex w-5"><Open /></span>
          <div className="flex h-5 w-[137px] items-center bg-[#f1f1f1]">
            <div className="ml-[2px] h-4 w-[3px] bg-[#ffa9ab]" />
            <span className="ml-[3px]"><Eye /></span>
            <div className="ml-[6px] flex h-4 w-[82px] items-center bg-[#979797] font-['DejaVu_Sans',sans-serif] text-[10px] font-bold text-white">
              <Ico vb="218 114 50 48" w={16.6} h={16} className="ml-[3px]">
                <path d="M220 121L227 115H241L244 120V134H262L267 139V153L260 160H223L219 155Z" fill="#f4f5f7" stroke="#3f4350" strokeWidth="2.5" /><path d="M241 138V159M222 138H241L245 134M245 141H261M244 120L239 124" stroke="#a2a6b0" strokeWidth="2" />
              </Ico>
              <span className="ml-[13px] tracking-[-0.25px]">test v6</span>
            </div>
            <Ico vb="0 0 39 39" w={13} h={13} className="ml-1"><circle cx="19.5" cy="19.5" r="17.5" fill="#fff" stroke="#333" strokeWidth="3.5" /><circle cx="19.5" cy="19.5" r="7" fill="#333" /></Ico>
          </div>
        </div>
        <Row pad="pl-9" arrow={arrowBox(<Closed />)} w="w-[130px]">
          <Ico vb="0 0 40 40" w={13} h={13} className="ml-[3px]"><circle cx="20" cy="20" r="11" stroke="#888" strokeWidth="8" /><circle cx="20" cy="20" r="16.5" stroke="#888" strokeWidth="7" strokeDasharray="6.5 6.46" /></Ico>
          <span className="ml-[13px] tracking-[-0.17px]">Document Settings</span>
        </Row>
        <Row pad="pl-9" arrow={arrowBox(<Closed />)} w="w-[110px] pl-[3px]"><Folder /><span className="ml-[14px] tracking-normal">Named Views</span></Row>
        <Row pad="pl-9" arrow={arrowBox(<Closed />)} w="w-[95px] pl-[3px] gap-[9px]"><Eye off /><Folder /><span className="ml-[5px] tracking-[-0.2px]">Origin</span></Row>
        <Row pad="pl-[35px]" arrow={<span className="flex w-[19px]"><Open /></span>} w="w-[115px] pl-[3px] gap-[9px]"><Eye /><Folder /><span className="ml-[5px]">Sketches</span></Row>
        {sketches.map(([n, off, lock, w]) => (
          <Row key={n} pad="pl-[72px]" w={`${w} pl-[3px] gap-[9px]`}><Eye off={off} /><SketchIcon lock={lock} /><span className="ml-[5px]">{n}</span></Row>
        ))}
        {comps.map((c, i) => (
          <Row key={c} pad="pl-9" arrow={arrowBox(<Closed />)} w={i === 9 ? "w-[148px]" : "w-[140px]"}>
            <div className={`h-5 w-[5px] ${c}`} />
            <span className="ml-[3px]"><Eye /></span><span className="ml-[9px]"><Cube anchor={i === 0} /></span>
            <span className="ml-[14px] tracking-[-0.33px]">{`Component${i + 1}:1`}</span>
          </Row>
        ))}
      </div>
    </div>
  );
}

const N = ({ x, w, children }: { x: number; w: number } & Kids) => <Ico vb={`${x} 45 ${w} 54`} w={w / 2.24} h={18}>{children}</Ico>;

function NavBar() {
  return (
    <div className="absolute left-[842px] top-[781px] flex h-6 w-[237px] items-center bg-[#f1f1f1]/90 text-[#333]">
      <span className="w-[2px]" />
      <N x={905} w={44}><path d="M926 50V96" stroke="#333" strokeWidth="6" /><path d="M926 52V94" stroke="#fff" strokeWidth="2" /><ellipse cx="926" cy="74" rx="15" ry="8" stroke="#333" strokeWidth="3" /><path d="M907 83L918 75V91ZM936 66L945 75L934 80Z" fill="#333" /></N>
      <span className="ml-[2px] mr-[5px]"><Caret /></span>
      <N x={976} w={46}><path d="M982 65H1016V94H982Z" fill="#fff" stroke="#333" strokeWidth="3" /><path d="M988 74H1010V86H988Z" fill="#aaa" stroke="#333" strokeWidth="2.5" /><path d="M984 62L996 50V58L1008 54V62" stroke="#333" strokeWidth="3" /></N>
      <span className="w-[6px]" />
      <N x={1036} w={44}><path d="M1049 92L1040 72Q1042 68 1048 75L1045 55Q1049 50 1052 57L1053 68L1054 52Q1058 48 1060 53V68L1064 55Q1068 52 1068 58L1067 70L1071 62Q1076 62 1074 67L1069 86V94H1050Z" fill="#fff" stroke="#333" strokeWidth="2.5" /></N>
      <span className="w-[7px]" />
      <N x={1095} w={44}><path d="M1117 82L1126 92" stroke="#333" strokeWidth="6" /><ellipse cx="1109" cy="70" rx="10" ry="14" fill="#e6f2f2" stroke="#333" strokeWidth="2.5" /><path d="M1128 50V62M1122 56H1134M1122 67H1134" stroke="#333" strokeWidth="2.5" /></N>
      <span className="w-[6px]" />
      <N x={1152} w={44}><path d="M1157 50H1190V93H1157Z" stroke="#333" strokeWidth="2" strokeDasharray="4 4" /><path d="M1180 80L1190 93" stroke="#333" strokeWidth="6" /><ellipse cx="1171" cy="68" rx="14" ry="18" fill="#dff0ef" stroke="#333" strokeWidth="2.5" /></N>
      <span className="ml-[3px] mr-[6px]"><Caret /></span>
      <N x={1228} w={40}><path d="M1231 50H1264V86H1231Z" fill="#fff" stroke="#444" strokeWidth="2.5" /><path d="M1235 55H1260V81H1235Z" fill="#a7c1ea" stroke="#456" strokeWidth="2" /><path d="M1240 94H1256V88" stroke="#444" strokeWidth="3" /></N>
      <span className="ml-[1px] mr-[6px]"><Caret /></span>
      <N x={1298} w={38}><path d="M1300 50H1334V94H1300Z" fill="#eef" /><path d="M1300 50H1334V94H1300ZM1307 50V94M1314 50V94M1321 50V94M1328 50V94M1300 58H1334M1300 66H1334M1300 74H1334M1300 82H1334" stroke="#555" strokeWidth="2" /></N>
      <span className="ml-[2px] mr-[6px]"><Caret /></span>
      <N x={1366} w={38}><path d="M1369 52H1384V70H1369ZM1387 52H1402V70H1387ZM1369 73H1384V91H1369ZM1387 73H1402V91H1387Z" fill="#a7c1ea" stroke="#345" strokeWidth="2.5" /></N>
      <span className="ml-[2px]"><Caret /></span>
    </div>
  );
}

/* ---------- timeline ---------- */

const TSketch = () => (
  <Ico vb="438 174 48 48" w={16} h={16}>
    <rect x="440" y="176" width="42" height="42" fill="#f8f8f8" stroke="#8a8a8a" strokeWidth="2.5" /><path d="M450 190V206M452 187H466M470 188Q470 202 452 209" stroke="#1a8ce3" strokeWidth="2.5" />
    <path d="M438 174h5v5h-5zM479 174h5v5h-5zM438 215h5v5h-5zM447 184h5v5h-5zM467 184h5v5h-5zM447 206h5v5h-5z" fill="#1a6fb8" />
    <path d="M463 212L476 199L483 206L470 218L461 221Z" fill="#fbb03b" /><path d="M477 198L481 194L486 200L483 205Z" fill="#f33f3f" />
  </Ico>
);
const TExtrude = () => (
  <Ico vb="510 174 48 48" w={16} h={16}>
    <path d="M511 216H542L548 208V214L542 222H511Z" fill="#999" /><path d="M511 182L518 175H548V206L541 214H511Z" fill={BL} /><path d="M511 182L518 175H548L541 182Z" fill={BT} /><path d="M541 182L548 175V206L541 214Z" fill={BD} /><path d="M554 176V214" stroke="#444" strokeWidth="2.5" />
  </Ico>
);
const TSphere = () => (
  <Ico vb="0 0 48 48" w={16} h={16}><circle cx="24" cy="24" r="24" fill={BL} /><path d="M0 25A24 24 0 0 1 48 25Q24 38 0 25Z" fill={BT} /></Ico>
);
const TFillet = ({ fresh = false }: { fresh?: boolean }) => (
  <Ico vb="942 174 48 48" w={16} h={16}>
    <path d="M943 187L955 176H970Q988 184 989 204V210L979 221H943Z" fill={GR} stroke={fresh ? "#444" : "#777"} strokeWidth="2.5" />
    {fresh ? <g><path d="M945 188L955 178H965L957 188Z" fill="#fff" /><Star x={977} y={187} r={15} /></g> : <path d="M962 185L970 175Q988 180 990 197L979 206Q975 190 962 185Z" fill={BL} />}
  </Ico>
);
const TComp = () => (
  <Ico vb="0 0 48 48" w={16} h={16}><rect x="2" y="2" width="20" height="20" rx="4" fill="#eee" stroke="#555" strokeWidth="3" /><path d="M7 28V38H16" stroke="#333" strokeWidth="3" /><path d="M14 32L22 38L14 44Z" fill="#333" /><path d="M26 28L30 24H47V43L43 47H26Z" fill={BL} /><path d="M26 28L30 24H47L43 28Z" fill={BT} /></Ico>
);
const TDots = () => (
  <Ico vb="0 0 48 48" w={16} h={16}><path d="M2 16H11V32H2ZM19 16H28V32H19ZM36 16H45V32H36Z" fill="#fff" stroke="#666" strokeWidth="4" /></Ico>
);

const feats: Record<string, () => React.ReactElement> = { s: TSketch, e: TExtrude, o: TSphere, f: () => <TFillet />, n: () => <TFillet fresh />, c: TComp, d: TDots };
const sequence = "sesooooffsooooscdssnefsef".split("");

function Timeline() {
  return (
    <div className="flex h-[50px] shrink-0 border-t border-[#d0d0d0] bg-[#f1f1f1]">
      <div className="mt-[16px] flex h-[14px] w-[144px] items-center pl-[11px]">
        <Ico vb="32 182 36 36" w={12} h={12}><path d="M33 182H38V218H33ZM66 184V217L39 200Z" fill="#595959" /></Ico>
        <Ico vb="105 182 40 36" w={13.3} h={12} className="ml-3"><path d="M135 183V217L106 200ZM138 194H144V208H138Z" fill="#595959" /></Ico>
        <Ico vb="182 178 37 44" w={12.3} h={14.6} className="ml-[13px]"><path d="M183 178V222L218 200Z" fill="#595959" /></Ico>
        <Ico vb="254 182 40 36" w={13.3} h={12} className="ml-[11px]"><path d="M264 183V217L293 200ZM255 194H261V208H255Z" fill="#595959" /></Ico>
        <Ico vb="331 182 36 36" w={12} h={12} className="ml-3"><path d="M361 182H366V218H361ZM333 184V217L360 200Z" fill="#595959" /></Ico>
      </div>
      <div className="relative w-[610px] pt-[7px]">
        <div className="flex h-[6px] gap-1">
          <div className="w-[476px] bg-[#ffadb1]" /><div className="w-[44px] bg-[#d7dc5a]" /><div className="w-[20px] bg-[#ffadb1]" /><div className="w-[44px] bg-[#d7dc5a]" />
        </div>
        <div className="mt-[2px] flex pl-[2px]">
          {sequence.map((k, i) => {
            const F = feats[k];
            return <div key={i} className="w-6"><F /></div>;
          })}
        </div>
        <div className="ml-[10px] mt-[3px] flex h-[7px] w-[578px] justify-between border-b-2 border-[#c6c6c6]">
          {sequence.map((_, i) => <div key={i} className="h-[5px] w-[2px] bg-[#c6c6c6]" />)}
        </div>
        <div className="absolute left-[387px] top-[34px] flex h-[10px] w-[10px] items-center justify-center bg-[#777]">
          <Ico vb="0 0 6 6" w={6} h={6}><path d="M3 0V6M0 3H6" stroke="#fff" strokeWidth="1.6" /></Ico>
        </div>
        <Ico vb="0 0 12 32" w={12} h={32} className="absolute left-[592px] top-[8px]"><path d="M0 0H12V5L7 10V32H5V10L0 5Z" fill="#5a5a5a" /></Ico>
      </div>
    </div>
  );
}

/* ---------- text commands ---------- */

function TextCommands() {
  return (
    <div className="flex h-[137px] shrink-0 flex-col overflow-hidden border-t border-[#c6c6c6] bg-[#f1f1f1]">
      <div className="flex h-[23px] shrink-0 items-center border-l border-[#c6c6c6] text-[#555]">
        <Ico vb="0 0 27 27" w={9} h={9} className="ml-[5px]"><circle cx="13.5" cy="13.5" r="13.5" fill="#333" /><path d="M6 13.5H21" stroke="#fff" strokeWidth="5" /></Ico>
        <span className="ml-[10px] font-['Roboto',sans-serif] text-[11px] tracking-[-0.3px]">TEXT COMMANDS</span>
      </div>
      <div className="ml-[3px] h-[100px] shrink-0 border-b border-t border-b-[#808080] border-t-[#e4e4e4] bg-white pl-1 pt-[15px] font-['Liberation_Mono',monospace] text-[11.66px] leading-[15px] text-black">
        <pre className="font-[inherit]">{"  Joint(base_link_joint; type=fixed; pose=None; parent=base_link; child=component8_1; axis_xyz=None; lower_limit=None; upper_limit=None)\n\nSaving SDF to \"C:\\Users\\mvos\\Desktop\\generated scripts\""}</pre>
      </div>
      <div className="ml-[3px] mt-[2px] flex h-[11px] shrink-0 overflow-hidden text-[12px] text-[#333]">
        <div className="w-[1802px] shrink-0 border border-b-0 border-[#e4e4e4] bg-white pl-[2px] pt-[3px] leading-[15px] tracking-[-0.22px] text-[#777]">Type Text Commands Here - Type '?' For Help</div>
        <div className="flex w-[86px] items-start gap-[6px] overflow-hidden pl-[3px] pt-[3px] leading-[15px]">
          <span className="h-[13px] w-[13px] shrink-0 rounded-full border-4 border-[#0067c0] bg-white" /><span className="w-[15px] shrink-0">Txt</span>
          <span className="h-[13px] w-[13px] shrink-0 rounded-full border border-[#777] bg-[#f6f6f6]" /><span className="w-[13px] shrink-0">Py</span>
          <span className="h-[13px] w-[13px] shrink-0 rounded-full border border-[#777] bg-[#f6f6f6]" />
        </div>
      </div>
    </div>
  );
}

export default function App() {
  return (
    <div className="flex h-[1139px] w-[1891px] flex-col overflow-hidden bg-white font-['Liberation_Sans',Arial,sans-serif]">
      <TitleBar />
      <TabBar />
      <Ribbon />
      <main className="relative h-[812px] shrink-0 overflow-hidden">
        <Scene />
        <Browser />
        <div className="absolute left-[4px] top-[783px] flex h-[25px] w-[300px] items-center border border-t-0 border-[#c6c6c6] bg-[#f1f1f1] pl-[24px]">
          <span className="font-['Roboto',sans-serif] text-[11px] tracking-[-0.1px] text-[#555]">COMMENTS</span>
          <Ico vb="0 0 27 27" w={9} h={9} className="ml-auto mr-[11px]"><circle cx="13.5" cy="13.5" r="13.5" fill="#333" /><path d="M6 13.5H21M13.5 6V21" stroke="#fff" strokeWidth="4" /></Ico>
        </div>
        <NavBar />
      </main>
      <Timeline />
      <TextCommands />
    </div>
  );
}
